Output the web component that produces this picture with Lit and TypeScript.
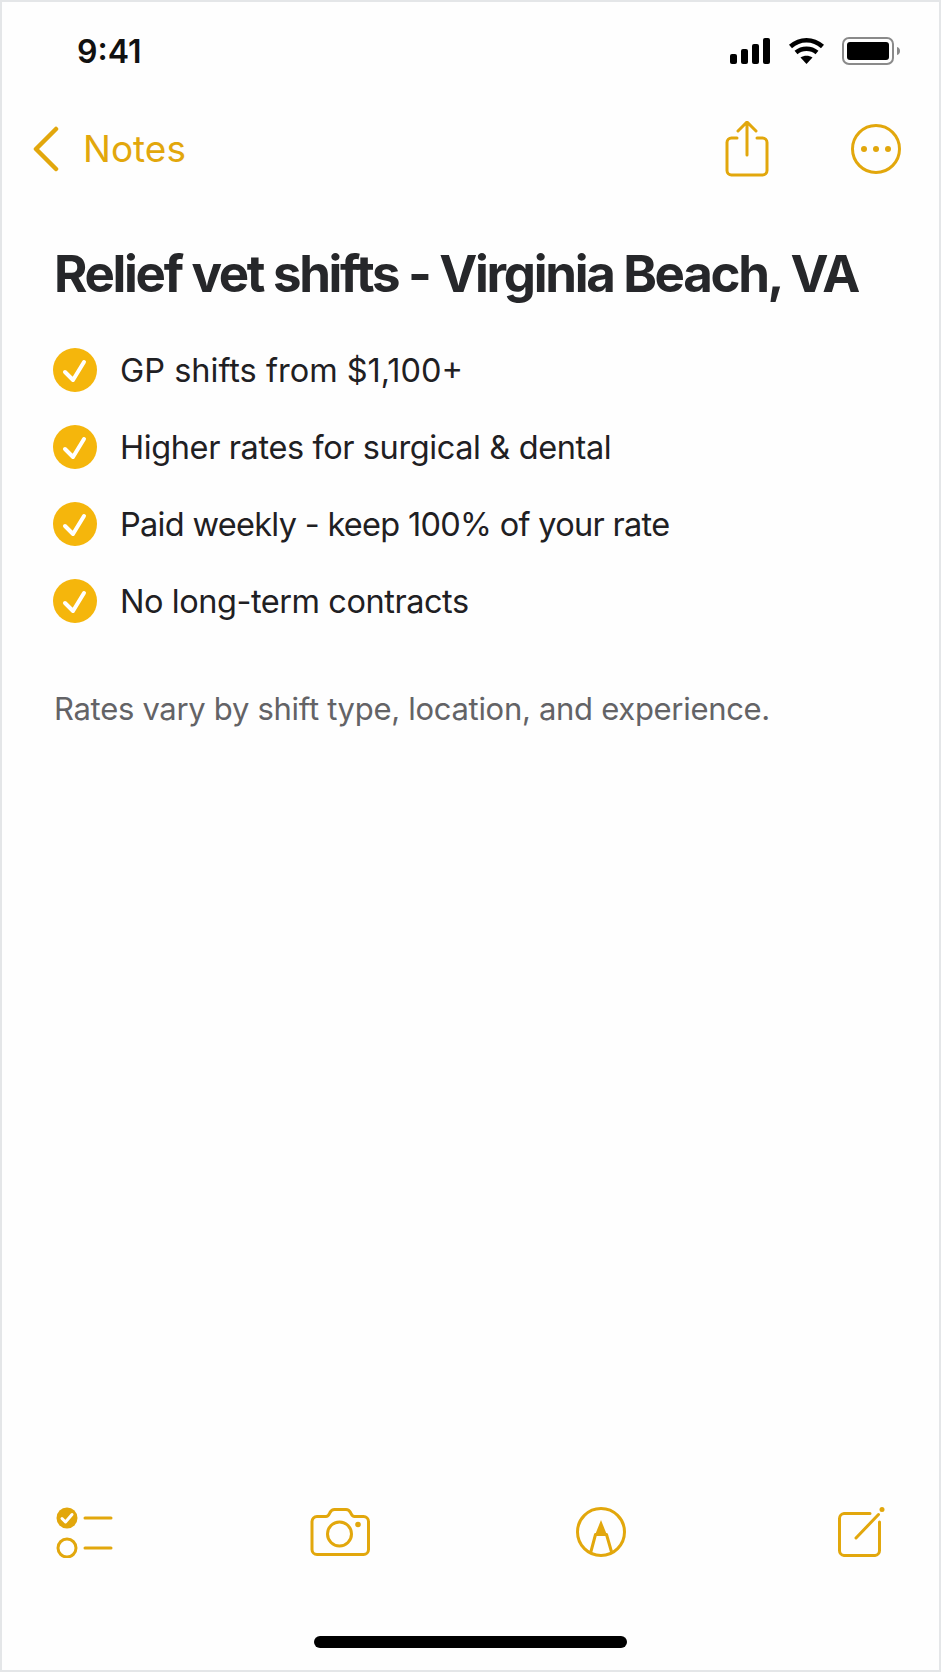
import { LitElement, html, css } from "lit";
import { customElement } from "lit/decorators.js";

const items = [
  { text: "GP shifts from $1,100+", tracking: 0 },
  { text: "Higher rates for surgical & dental", tracking: -0.39 },
  { text: "Paid weekly - keep 100% of your rate", tracking: -0.7 },
  { text: "No long-term contracts", tracking: -0.45 },
];

@customElement("app-root")
export class AppRoot extends LitElement {
  static styles = css`
    :host {
      display: block;
      width: 941px;
      height: 1672px;
      font-family: Inter, "Liberation Sans", sans-serif;
      color: #1f2023;
    }
    .frame {
      box-sizing: border-box;
      width: 941px;
      height: 1672px;
      background: #fefefe;
      border: 2px solid #e4e6e8;
      display: flex;
      flex-direction: column;
    }
    svg { display: block; flex: none; }
    .status {
      height: 77px;
      padding: 22px 37px 0 75px;
      display: flex;
      align-items: center;
      justify-content: space-between;
      box-sizing: border-box;
    }
    .time { font-size: 32px; font-weight: 600; color: #111; line-height: 38px; }
    .status-icons { display: flex; align-items: center; gap: 17px; margin-bottom: 2px; }
    .nav {
      height: 106px;
      box-sizing: border-box;
      padding: 34px 38px 0 29px;
      display: flex;
      align-items: center;
      justify-content: space-between;
    }
    .back { display: flex; align-items: center; gap: 22px; color: #e2a70c; font-size: 37px; line-height: 44px; }
    .nav-actions { display: flex; align-items: center; gap: 82px; }
    .content { padding: 60px 0 0 52px; flex: 1; }
    h1 {
      margin: 0;
      font-size: 51px;
      font-weight: 700;
      line-height: 58px;
      letter-spacing: -2.32px;
      color: #26272a;
      white-space: nowrap;
    }
    ul { list-style: none; margin: 45px 0 0 -1px; padding: 0; display: flex; flex-direction: column; gap: 33px; }
    li {
      display: flex;
      align-items: center;
      gap: 23px;
      height: 44px;
      font-size: 32.5px;
      white-space: nowrap;
    }
    .note { margin: 66px 0 0; font-size: 31px; letter-spacing: -0.3px; line-height: 40px; color: #636366; white-space: nowrap; }
    .toolbar {
      padding: 0 0 0 54px;
      display: grid;
      grid-template-columns: 254px 266px 261px auto;
      align-items: center;
    }
    .home { height: 12px; width: 313px; border-radius: 6px; background: #000; margin: 78px auto 22px; }
  `;

  render() {
    const gold = "#e2a70c";
    return html`
      <div class="frame">
        <div class="status">
          <span class="time">9:41</span>
          <div class="status-icons">
            <svg width="41" height="26" viewBox="0 0 41 26" fill="#000">
              <rect x="0" y="16" width="7" height="10" rx="2"></rect>
              <rect x="11" y="11" width="7" height="15" rx="2"></rect>
              <rect x="22" y="6" width="7" height="20" rx="2"></rect>
              <rect x="33" y="0" width="7" height="26" rx="2"></rect>
            </svg>
            <svg width="37" height="28" viewBox="0 0 37 28">
              <path d="M2.500 9.500C12 1 25 1 34.500 9.500M8 15.500C14 10.500 23 10.500 29 15.500" fill="none" stroke="#000" stroke-width="4.500"></path>
              <path d="M12.500 20.500C16 18 21 18 24.500 20.500L18.500 27Z" fill="#000"></path>
            </svg>
            <svg width="60" height="28" viewBox="0 0 60 28">
              <rect x="1" y="1" width="50" height="26" rx="6" fill="none" stroke="#8a8a8a" stroke-width="2"></rect>
              <rect x="5" y="5" width="42" height="18" rx="3" fill="#000"></rect>
              <path d="M55 10c2 .5 3 2 3 4s-1 3.500-3 4z" fill="#8a8a8a"></path>
            </svg>
          </div>
        </div>

        <div class="nav">
          <div class="back">
            <svg width="30" height="46" viewBox="0 0 30 46" fill="none" stroke="${gold}" stroke-width="4.500" stroke-linecap="round" stroke-linejoin="round">
              <path d="M25 3 5 23l20 20"></path>
            </svg>
            <span>Notes</span>
          </div>
          <div class="nav-actions">
            <svg width="44" height="56" viewBox="0 0 44 56" fill="none" stroke="${gold}" stroke-width="3" stroke-linecap="round" stroke-linejoin="round">
              <path d="M12 17H6.500A4.500 4.500 0 0 0 2 21.500V49.500A4.500 4.500 0 0 0 6.500 54H37.500A4.500 4.500 0 0 0 42 49.500V21.500A4.500 4.500 0 0 0 37.500 17H32"></path>
              <path d="M22 34V1M13 10l9-9 9 9"></path>
            </svg>
            <svg width="50" height="50" viewBox="0 0 50 50" fill="none" stroke="${gold}" stroke-width="3">
              <circle cx="25" cy="25" r="23.500"></circle>
              <g fill="${gold}" stroke="none">
                <circle cx="13" cy="25" r="3"></circle>
                <circle cx="25" cy="25" r="3"></circle>
                <circle cx="37" cy="25" r="3"></circle>
              </g>
            </svg>
          </div>
        </div>

        <div class="content">
          <h1>Relief vet shifts - Virginia Beach, VA</h1>
          <ul>
            ${items.map(
              (t) => html`<li>
                <svg width="44" height="44" viewBox="0 0 44 44">
                  <circle cx="22" cy="22" r="22" fill="#f5b60c"></circle>
                  <path d="M12 24l8 8L31 14" fill="none" stroke="#fff" stroke-width="4" stroke-linecap="round" stroke-linejoin="round"></path>
                </svg>
                <span style="letter-spacing:${t.tracking}px">${t.text}</span>
              </li>`
            )}
          </ul>
          <p class="note">Rates vary by shift type, location, and experience.</p>
        </div>

        <div class="toolbar">
          <svg width="58" height="52" viewBox="0 0 58 52" fill="none" stroke="${gold}" stroke-width="3" stroke-linecap="round">
            <circle cx="11" cy="12" r="10.500" fill="${gold}" stroke="none"></circle>
            <path d="M6 12.500l3.500 3.500L16 8.500" stroke="#fff" stroke-linejoin="round"></path>
            <path d="M29 12h26M29 42h26"></path>
            <circle cx="11" cy="42" r="9"></circle>
          </svg>
          <svg width="60" height="48" viewBox="0 0 60 48" fill="none" stroke="${gold}" stroke-width="3" stroke-linejoin="round">
            <path d="M7 8.500H16C18.500 8.500 19 6.500 20 4.500C21 2.500 22 1.500 24.500 1.500H36C38.500 1.500 39.500 2.500 40.500 4.500C41.500 6.500 42 8.500 44.500 8.500H53.500A5 5 0 0 1 58.500 13.500V41.500A5 5 0 0 1 53.500 46.500H7A5 5 0 0 1 2 41.500V13.500A5 5 0 0 1 7 8.500Z"></path>
            <circle cx="29.500" cy="26" r="12"></circle>
            <circle cx="48" cy="16.500" r="2.800" fill="${gold}" stroke="none"></circle>
          </svg>
          <svg width="50" height="52" viewBox="0 0 50 52" fill="none" stroke="${gold}" stroke-width="3" stroke-linejoin="round">
            <circle cx="25" cy="26" r="23.500"></circle>
            <path d="M14.700 46.500 19.500 28.500H30.500L35.700 46.500"></path>
            <path d="M25 14l-6 15h12z" fill="${gold}" stroke="none"></path>
          </svg>
          <svg width="48" height="52" viewBox="0 0 48 52" fill="none" stroke="${gold}" stroke-width="3" stroke-linecap="round">
            <path d="M33 7.500H7A5 5 0 0 0 2.500 12.500V44.500A5 5 0 0 0 7 49.500H38A5 5 0 0 0 42.500 44.500V16"></path>
            <path d="M19 32 41.500 8.500"></path>
            <circle cx="45" cy="3.500" r="2.500" fill="${gold}" stroke="none"></circle>
          </svg>
        </div>
        <div class="home"></div>
      </div>
    `;
  }
}
